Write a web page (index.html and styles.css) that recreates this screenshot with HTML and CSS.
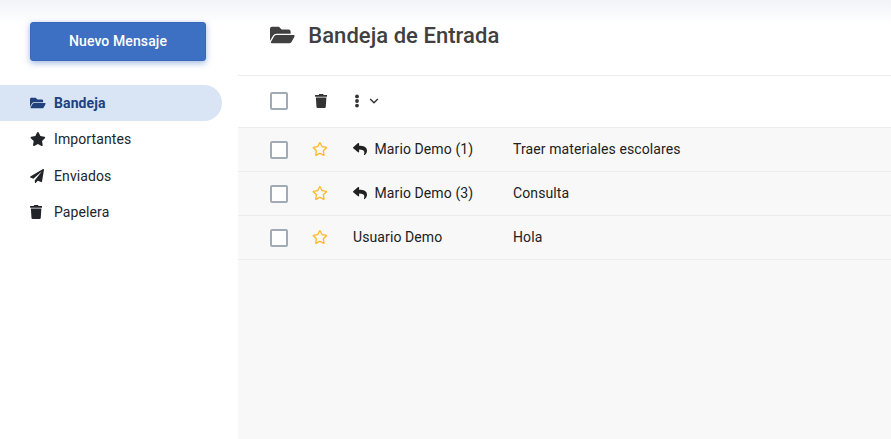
FILE: index.html
```
<!DOCTYPE html>
<html lang="es">
<head>
<meta charset="utf-8">
<title>Bandeja de Entrada</title>
<link rel="stylesheet" href="styles.css">
</head>
<body>
<svg class="symbols" aria-hidden="true">
  <symbol id="folder" viewBox="0 0 576 512"><path d="M572.694 292.093L500.27 416.248A63.997 63.997 0 0 1 444.989 448H45.025c-18.523 0-30.064-20.093-20.731-36.093l72.424-124.155A64 64 0 0 1 152 256h399.964c18.523 0 30.064 20.093 20.73 36.093zM152 224h328v-48c0-26.51-21.49-48-48-48H272l-64-64H48C21.49 64 0 85.49 0 112v278.046l69.077-118.418C86.214 242.25 117.989 224 152 224z"/></symbol>
  <symbol id="star" viewBox="0 0 576 512"><path d="M259.3 17.8L194 150.2 47.9 171.5c-26.2 3.8-36.7 36.1-17.7 54.6l105.7 103-25 145.5c-4.5 26.3 23.2 46 46.4 33.7L288 439.6l130.7 68.7c23.2 12.2 50.9-7.4 46.4-33.7l-25-145.5 105.7-103c19-18.5 8.5-50.8-17.7-54.6L382 150.2 316.7 17.8c-11.7-23.6-45.6-23.9-57.4 0z"/></symbol>
  <symbol id="star-o" viewBox="0 0 576 512"><path d="M528.1 171.5L382 150.2 316.7 17.8c-11.7-23.6-45.6-23.9-57.4 0L194 150.2 47.9 171.5c-26.2 3.8-36.7 36.1-17.7 54.6l105.7 103-25 145.5c-4.5 26.3 23.2 46 46.4 33.7L288 439.6l130.7 68.7c23.2 12.2 50.9-7.4 46.4-33.7l-25-145.5 105.7-103c19-18.5 8.5-50.8-17.7-54.6zM388.6 312.3l23.7 138.4L288 385.4l-124.3 65.3 23.7-138.4-100.6-98 139-20.2 62.2-126 62.2 126 139 20.2-100.6 98z"/></symbol>
  <symbol id="plane" viewBox="0 0 512 512"><path d="M476 3.2L12.5 270.6c-18.1 10.4-15.8 35.6 2.2 43.2L121 358.4l287.3-253.2c5.5-4.9 13.3 2.6 8.6 8.3L176 407v80.5c0 23.6 28.5 32.9 42.5 15.8L282 426l124.6 52.2c14.2 6 30.4-2.9 33-18.2l72-432C515 7.8 493.3-6.8 476 3.2z"/></symbol>
  <symbol id="trash" viewBox="0 0 448 512"><path d="M432 32H312l-9.4-18.7A24 24 0 0 0 281.1 0H166.8a23.72 23.72 0 0 0-21.4 13.3L136 32H16A16 16 0 0 0 0 48v32a16 16 0 0 0 16 16h416a16 16 0 0 0 16-16V48a16 16 0 0 0-16-16zM53.2 467a48 48 0 0 0 47.9 45h245.8a48 48 0 0 0 47.9-45L416 128H32z"/></symbol>
  <symbol id="reply" viewBox="0 0 512 512"><path d="M8.309 189.836L184.313 37.851C199.719 24.546 224 35.347 224 56.015v80.053c160.629 1.839 288 34.032 288 186.258 0 61.441-39.581 122.309-83.333 154.132-13.653 9.931-33.111-2.533-28.077-18.631 45.344-145.012-21.507-183.51-176.59-185.742V360c0 20.7-24.3 31.453-39.687 18.164l-176.004-152c-11.071-9.562-11.086-26.753 0-36.328z"/></symbol>
</svg>
<div class="app">
  <aside class="sidebar">
    <button class="compose">Nuevo Mensaje</button>
    <nav class="menu">
      <a class="item active"><svg class="icon wide"><use href="#folder"/></svg>Bandeja</a>
      <a class="item"><svg class="icon wide"><use href="#star"/></svg>Importantes</a>
      <a class="item"><svg class="icon"><use href="#plane"/></svg>Enviados</a>
      <a class="item"><svg class="icon narrow"><use href="#trash"/></svg>Papelera</a>
    </nav>
  </aside>
  <main class="mail">
    <header class="heading">
      <svg class="heading-icon"><use href="#folder"/></svg>
      <h1>Bandeja de Entrada</h1>
    </header>
    <div class="toolbar">
      <span class="check"></span>
      <svg class="delete"><use href="#trash"/></svg>
      <svg class="dots" viewBox="0 0 4 14"><circle cx="2" cy="2.4" r="1.9"/><circle cx="2" cy="7" r="1.9"/><circle cx="2" cy="11.6" r="1.9"/></svg>
      <svg class="chevron" viewBox="0 0 10 6"><path d="M1.2 1L5 4.7 8.8 1"/></svg>
    </div>
    <div class="row">
      <span class="check"></span>
      <svg class="fav"><use href="#star-o"/></svg>
      <span class="sender"><svg class="reply"><use href="#reply"/></svg>Mario Demo (1)</span>
      <span class="subject">Traer materiales escolares</span>
    </div>
    <div class="row">
      <span class="check"></span>
      <svg class="fav"><use href="#star-o"/></svg>
      <span class="sender"><svg class="reply"><use href="#reply"/></svg>Mario Demo (3)</span>
      <span class="subject">Consulta</span>
    </div>
    <div class="row">
      <span class="check"></span>
      <svg class="fav"><use href="#star-o"/></svg>
      <span class="sender">Usuario Demo</span>
      <span class="subject">Hola</span>
    </div>
  </main>
</div>
</body>
</html>
```
FILE: styles.css
```
* { box-sizing: border-box; }
body {
  margin: 0;
  font: 400 14px/20px Roboto, sans-serif;
  letter-spacing: 0.1px;
  color: #212529;
  background: #fff;
}
svg { display: block; flex: none; fill: currentColor; }
.symbols { display: none; }
.app {
  display: flex;
  height: 439px;
  overflow: hidden;
  background: linear-gradient(#f2f3f8, #fff 24px);
}
.sidebar { width: 238px; flex: none; padding-top: 22px; }
.compose {
  display: block;
  width: 176px;
  height: 39px;
  margin: 0 0 24px 30px;
  padding: 0 0 2px;
  border: 1px solid #3a69bb;
  border-radius: 3px;
  background: #3d6fc3;
  box-shadow: 0 2px 6px rgba(61, 111, 195, 0.5);
  color: #fff;
  font: 500 14px/20px Roboto, sans-serif;
  letter-spacing: 0.1px;
}
.menu { display: flex; flex-direction: column; gap: 0.4px; }
.item {
  display: flex;
  align-items: center;
  width: 222px;
  height: 36px;
  padding-left: 30px;
}
.active {
  border-radius: 0 18px 18px 0;
  background: #d9e4f5;
  color: #21417d;
  font-weight: 700;
}
.icon { width: 14px; height: 14px; margin-right: 10px; }
.icon.wide { width: 15.75px; margin-right: 8.25px; }
.icon.narrow { width: 12.25px; margin-right: 11.75px; }
.mail {
  flex: 1;
  display: flex;
  flex-direction: column;
}
.heading {
  display: flex;
  align-items: center;
  height: 76px;
  padding: 0 0 4px 32px;
  border-bottom: 1px solid #ececec;
  color: #404040;
}
.heading-icon { width: 24.75px; height: 22px; margin: 0 13.5px 2px 0; }
h1 { margin: 0; font-size: 22px; line-height: 28px; font-weight: 500; letter-spacing: 0.05px; }
.toolbar {
  display: flex;
  align-items: center;
  height: 51px;
  padding: 0 0 1px 32px;
  background: #fff;
  color: #333;
}
.check {
  flex: none;
  width: 18px;
  height: 18px;
  border: 2px solid #a1abb5;
  border-radius: 2px;
  background: #fff;
}
.delete { width: 12.25px; height: 14px; margin-left: 27.25px; }
.dots { width: 4px; height: 14px; margin-left: 27.5px; }
.chevron { width: 10px; height: 6px; margin-left: 10px; }
.chevron path { fill: none; stroke: currentColor; stroke-width: 1.5; }
.row {
  display: flex;
  align-items: center;
  height: 44px;
  padding-left: 32px;
  border-top: 1px solid #ececec;
  background: #f8f8f8;
  color: #212121;
}
.mail::after {
  content: "";
  flex: 1;
  border-top: 1px solid #ececec;
  background: #f8f8f8;
}
.fav { width: 15.75px; height: 14px; margin: 0 0 1px 24.25px; color: #fdb92c; }
.sender { display: flex; align-items: center; width: 160px; margin-left: 25px; }
.sender, .subject { padding-bottom: 2px; }
.reply { width: 14px; height: 14px; margin-right: 7.5px; }
```
